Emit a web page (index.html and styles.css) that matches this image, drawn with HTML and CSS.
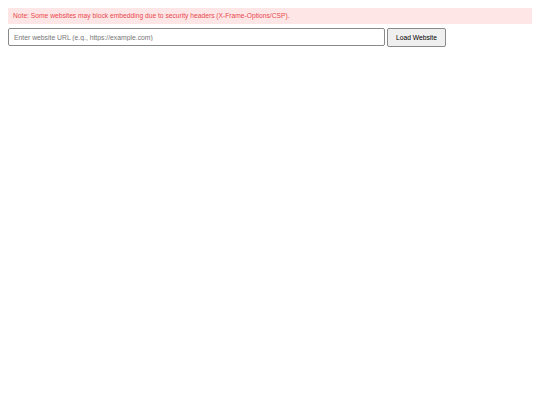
FILE: index.html
```html
<!DOCTYPE html>
<html>
<head>
<meta charset="utf-8">
<link rel="stylesheet" href="styles.css">
</head>
<body>
<div class="note">Note: Some websites may block embedding due to security headers (X-Frame-Options/CSP).</div>
<div class="bar">
  <input class="url" type="text" placeholder="Enter website URL (e.g., https://example.com)">
  <button class="load">Load Website</button>
</div>
</body>
</html>
```
FILE: styles.css
```css
html, body { background: #fff; }
body {
  margin: 8px;
  font-family: "Liberation Sans", Arial, sans-serif;
}
.note {
  background: #ffe6e6;
  color: #e8484d;
  font-size: 6.7px;
  height: 16px;
  line-height: 16px;
  padding: 0 5px;
  box-sizing: border-box;
  margin-bottom: 4px;
}
.bar {
  display: flex;
  gap: 2px;
  align-items: stretch;
}
.url {
  width: 377px;
  height: 18px;
  box-sizing: border-box;
  border: 1px solid #8a8a8a;
  border-radius: 2px;
  padding: 0 5px;
  font-family: "Liberation Sans", Arial, sans-serif;
  font-size: 6.8px;
  margin: 0;
  outline: none;
}
.url::placeholder { color: #757575; }
.load {
  width: 59px;
  height: 19px;
  box-sizing: border-box;
  border: 1px solid #8a8a8a;
  border-radius: 2px;
  background: #efefef;
  color: #000;
  font-family: "Liberation Sans", Arial, sans-serif;
  font-size: 6.7px;
  padding: 0;
  margin: 0;
}
```
